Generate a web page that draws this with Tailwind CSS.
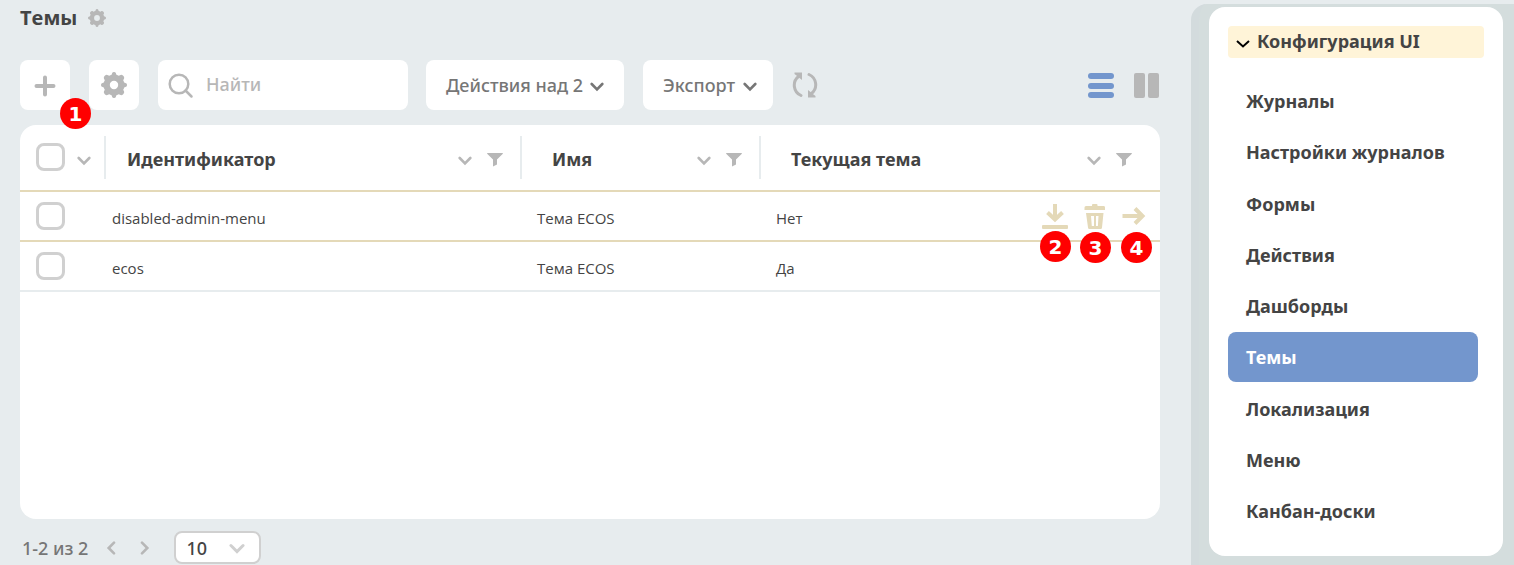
<!DOCTYPE html>
<html lang="ru">
<head>
<meta charset="utf-8">
<meta name="viewport" content="width=device-width, initial-scale=1">
<title>Темы</title>
<script src="https://cdn.jsdelivr.net/npm/@tailwindcss/browser@4"></script>
</head>
<body class="bg-[#e7ecee] font-['Open_Sans','Noto_Sans',sans-serif] text-[#444444]">
<svg class="hidden" aria-hidden="true">
  <symbol id="gear" viewBox="0 0 26 26">
    <path fill="currentColor" fill-rule="evenodd" d="M10.6 2.8 11.2 1Q11.500 0 13 0T14.800 1L15.400 2.800Q16.800 3.200 17.800 3.800L19.600 2.900Q20.800 2.400 22.200 3.800T23.100 6.400L22.200 8.200Q22.900 9.300 23.200 10.600L25 11.200Q26 11.500 26 13T25 14.800L23.200 15.400Q22.900 16.700 22.200 17.800L23.100 19.600Q23.600 20.800 22.200 22.200T19.600 23.100L17.800 22.200Q16.800 22.800 15.400 23.200L14.800 25Q14.500 26 13 26T11.200 25L10.600 23.200Q9.200 22.800 8.200 22.200L6.400 23.100Q5.200 23.600 3.800 22.200T2.900 19.600L3.800 17.800Q3.100 16.700 2.800 15.400L1 14.800Q0 14.500 0 13T1 11.200L2.800 10.600Q3.100 9.300 3.800 8.200L2.900 6.400Q2.400 5.200 3.800 3.800T6.400 2.900L8.200 3.800Q9.200 3.200 10.600 2.800ZM13 8.800a4.200 4.200 0 1 0 0 8.400a4.200 4.200 0 1 0 0-8.400Z"/>
  </symbol>
  <symbol id="chevron" viewBox="0 0 14 10">
    <path fill="none" stroke="currentColor" stroke-width="2.600" stroke-linecap="round" d="M1.700 2 7 7.300 12.300 2"/>
  </symbol>
  <symbol id="funnel" viewBox="0 0 16 14">
    <path fill="currentColor" d="M.5 0h15q.8.300.1 1L10 6.500V11.500L6 13.500V6.500L.4 1Q-.3.300.5 0Z"/>
  </symbol>
</svg>
<div class="flex min-h-screen">
  <main class="min-w-0 flex-1 pl-5 pr-[31px]">
    <header class="flex h-9 items-center gap-[11px]">
      <h1 class="text-xl font-bold">Темы</h1>
      <button type="button" aria-label="Настройки страницы" class="text-[#b7b7b7]"><svg class="size-[18px]"><use href="#gear"/></svg></button>
    </header>

    <div class="mt-6 flex h-[50px] items-center">
      <button type="button" aria-label="Создать" class="relative grid size-[50px] place-items-center rounded-lg bg-white text-[#b7b7b7]">
        <svg class="mt-0.5 size-[22px]" viewBox="0 0 22 22"><path fill="none" stroke="currentColor" stroke-width="4" stroke-linecap="round" d="M11 2.500v17M2.500 11h17"/></svg>
        <span class="absolute left-10 top-[38px] z-10 grid size-[31px] place-items-center rounded-full bg-[#ff0000] font-['DejaVu_Sans',sans-serif] text-xl font-bold leading-5 text-white">1</span>
      </button>
      <button type="button" aria-label="Настройки журнала" class="ml-[19px] grid size-[50px] place-items-center rounded-lg bg-white text-[#b7b7b7]"><svg class="size-[26px]"><use href="#gear"/></svg></button>
      <label class="ml-[19px] flex h-[50px] w-[250px] items-center gap-3 rounded-lg bg-white pl-2.5 text-[#b7b7b7]">
        <svg class="mt-0.5 size-[26px] shrink-0" viewBox="0 0 26 26"><g fill="none" stroke="currentColor" stroke-width="2.500" stroke-linecap="round"><circle cx="11" cy="11" r="9.300"/><path d="m17.500 17.500 6 6"/></g></svg>
        <input type="text" aria-label="Найти" placeholder="Найти" class="min-w-0 flex-1 pb-0.5 font-['Noto_Sans',sans-serif] text-lg font-medium text-[#444444] outline-none placeholder:text-[#b7b7b7]">
      </label>
      <button type="button" class="ml-[18px] flex h-[50px] items-center gap-[7px] rounded-lg bg-white px-5 font-['Noto_Sans',sans-serif] text-lg font-medium text-[#767676]">Действия над 2<svg class="mt-1 h-2.5 w-3.5"><use href="#chevron"/></svg></button>
      <button type="button" class="ml-[19px] flex h-[50px] items-center gap-2 rounded-lg bg-white pl-5 pr-4 font-['Noto_Sans',sans-serif] text-lg font-medium text-[#767676]">Экспорт<svg class="mt-1 h-2.5 w-3.5"><use href="#chevron"/></svg></button>
      <button type="button" aria-label="Обновить" class="ml-[19px] text-[#b7b7b7]">
        <svg class="size-[26px]" viewBox="0 0 26 26"><g fill="none" stroke="currentColor" stroke-width="3" stroke-linecap="round"><path d="M9 23.500A11.200 11.200 0 0 1 6.500 4.500"/><path d="M17 2.500A11.200 11.200 0 0 1 19.500 21.500"/></g><path fill="currentColor" d="M2.500.5h7.500v7.500L7.500 6 4.500 3.500 2.500 2ZM23.500 25.500H16v-7.500l2.500 2 3 2.500 2 1.500Z"/></svg>
      </button>
      <div class="ml-auto flex gap-5">
        <button type="button" aria-label="Таблица" class="text-[#7396cd]"><svg class="size-[26px]" viewBox="0 0 26 26"><g fill="currentColor"><rect y="1" width="26" height="6" rx="3"/><rect y="11" width="26" height="6" rx="3"/><rect y="20" width="26" height="6" rx="3"/></g></svg></button>
        <button type="button" aria-label="Предпросмотр" class="text-[#b7b7b7]"><svg class="size-[26px]" viewBox="0 0 26 26"><g fill="currentColor"><rect y="1" width="11" height="25" rx="2"/><rect x="14" y="1" width="11" height="25" rx="2"/></g></svg></button>
      </div>
    </div>

    <section class="mt-[15px] min-h-[394px] rounded-2xl bg-white">
      <table class="w-full table-fixed border-separate border-spacing-0 text-left">
        <colgroup><col class="w-[86px]"><col class="w-[416px]"><col class="w-[239px]"><col></colgroup>
        <thead>
          <tr class="font-['Noto_Sans',sans-serif] text-lg text-[#b7b7b7]">
            <th class="h-[67px] border-b-2 border-[#e4d9b8] p-0 align-middle">
              <div class="flex h-[43px] items-center border-r-2 border-[#e7ecee] pl-4">
                <input type="checkbox" aria-label="Выбрать все" class="mb-0.5 h-7 w-[29px] appearance-none rounded-lg border-3 border-[#d0d0d0] bg-white">
                <button type="button" aria-label="Меню выбора" class="ml-3 mt-1.5"><svg class="h-2.5 w-3.5"><use href="#chevron"/></svg></button>
              </div>
            </th>
            <th class="border-b-2 border-[#e4d9b8] p-0">
              <div class="flex h-[43px] items-center border-r-2 border-[#e7ecee] pl-[21px] pr-[17px]">
                <span class="flex-1 pt-0.5 font-bold text-[#444444]">Идентификатор</span>
                <button type="button" aria-label="Сортировка" class="mt-1.5"><svg class="h-2.5 w-3.5"><use href="#chevron"/></svg></button>
                <button type="button" aria-label="Фильтр" class="ml-[15px] mt-1"><svg class="h-3.5 w-4"><use href="#funnel"/></svg></button>
              </div>
            </th>
            <th class="border-b-2 border-[#e4d9b8] p-0">
              <div class="flex h-[43px] items-center border-r-2 border-[#e7ecee] pl-[30px] pr-[17px]">
                <span class="flex-1 pt-0.5 font-bold text-[#444444]">Имя</span>
                <button type="button" aria-label="Сортировка" class="mt-1.5"><svg class="h-2.5 w-3.5"><use href="#chevron"/></svg></button>
                <button type="button" aria-label="Фильтр" class="ml-[15px] mt-1"><svg class="h-3.5 w-4"><use href="#funnel"/></svg></button>
              </div>
            </th>
            <th class="border-b-2 border-[#e4d9b8] p-0">
              <div class="flex h-[43px] items-center pl-[30px] pr-7">
                <span class="flex-1 pt-0.5 font-bold text-[#444444]">Текущая тема</span>
                <button type="button" aria-label="Сортировка" class="mt-1.5"><svg class="h-2.5 w-3.5"><use href="#chevron"/></svg></button>
                <button type="button" aria-label="Фильтр" class="ml-[15px] mt-1"><svg class="h-3.5 w-4"><use href="#funnel"/></svg></button>
              </div>
            </th>
          </tr>
        </thead>
        <tbody class="text-[15px]">
          <tr>
            <td class="h-[50px] border-b-2 border-[#e4d9b8] p-0 pl-4"><input type="checkbox" aria-label="Выбрать disabled-admin-menu" class="block h-7 w-[29px] appearance-none rounded-lg border-3 border-[#d0d0d0] bg-white"></td>
            <td class="border-b-2 border-[#e4d9b8] p-0 pl-1.5 pt-1">disabled-admin-menu</td>
            <td class="border-b-2 border-[#e4d9b8] p-0 pl-[15px] pt-1">Тема ECOS</td>
            <td class="border-b-2 border-[#e4d9b8] p-0 pl-[15px] pr-3.5">
              <div class="flex items-center text-[#e4d9b8]">
                <span class="flex-1 pt-1 text-[#444444]">Нет</span>
                <button type="button" aria-label="Скачать" class="relative">
                  <svg class="size-[26px]" viewBox="0 0 26 26"><path fill="none" stroke="currentColor" stroke-width="4" d="M13 1v15M5.500 9.500l7.500 7 7.500-7"/><rect y="22" width="26" height="4" rx="1" fill="currentColor"/></svg>
                  <span class="absolute -left-0.5 top-7 z-10 grid size-[31px] place-items-center rounded-full bg-[#ff0000] font-['DejaVu_Sans',sans-serif] text-xl font-bold leading-5 text-white">2</span>
                </button>
                <button type="button" aria-label="Удалить" class="relative ml-4">
                  <svg class="h-[26px] w-[22px]" viewBox="0 0 22 26"><path fill="currentColor" fill-rule="evenodd" d="M2 3H8V2Q8 1 9 1H12.500Q13.500 1 13.500 2V3H20Q21 3 21 4.500V7H.5V4.500Q.5 3 2 3ZM2 10H19.500L18 24.500Q18 26 16.500 26H5.500Q4 26 4 24.500ZM7 13 7.800 23H10V13ZM12 13V23H13.900L14.500 13Z"/></svg>
                  <span class="absolute -left-1 top-[29px] z-10 grid size-[31px] place-items-center rounded-full bg-[#ff0000] font-['DejaVu_Sans',sans-serif] text-xl font-bold leading-5 text-white">3</span>
                </button>
                <button type="button" aria-label="Открыть" class="relative ml-4">
                  <svg class="h-[26px] w-6" viewBox="0 0 24 26"><path fill="none" stroke="currentColor" stroke-width="4" d="M.5 13H21M13 5.500 20.500 13 13 20.500"/></svg>
                  <span class="absolute -left-px top-[29px] z-10 grid size-[31px] place-items-center rounded-full bg-[#ff0000] font-['DejaVu_Sans',sans-serif] text-xl font-bold leading-5 text-white">4</span>
                </button>
              </div>
            </td>
          </tr>
          <tr>
            <td class="h-[50px] border-b-2 border-[#e7ecee] p-0 pl-4"><input type="checkbox" aria-label="Выбрать ecos" class="block h-7 w-[29px] appearance-none rounded-lg border-3 border-[#d0d0d0] bg-white"></td>
            <td class="border-b-2 border-[#e7ecee] p-0 pl-1.5 pt-1">ecos</td>
            <td class="border-b-2 border-[#e7ecee] p-0 pl-[15px] pt-1">Тема ECOS</td>
            <td class="border-b-2 border-[#e7ecee] p-0 pl-[15px] pt-1">Да</td>
          </tr>
        </tbody>
      </table>
    </section>

    <footer class="mt-3 flex items-center font-['Noto_Sans',sans-serif] text-lg font-medium text-[#767676]">
      <span class="pl-0.5">1-2 из 2</span>
      <button type="button" aria-label="Назад" class="ml-4 text-[#b7b7b7]"><svg class="h-3.5 w-3.5 rotate-90"><use href="#chevron"/></svg></button>
      <button type="button" aria-label="Вперёд" class="ml-5 text-[#b7b7b7]"><svg class="h-3.5 w-3.5 -rotate-90"><use href="#chevron"/></svg></button>
      <div class="relative ml-[22px]">
        <select aria-label="Записей на странице" class="h-[33px] w-[87px] appearance-none rounded-lg border-2 border-[#d0d0d0] bg-white pl-2.5 text-lg font-medium text-[#444444]"><option>10</option><option>20</option><option>50</option></select>
        <svg class="pointer-events-none absolute right-4 top-3 h-3 w-4 text-[#d0d0d0]"><use href="#chevron"/></svg>
      </div>
    </footer>
  </main>

  <aside class="mt-1 w-[323px] shrink-0 rounded-tl-2xl border-l-8 border-[#d3dbdd] bg-[#d4dddd] pb-[9px] pl-2.5 pr-[11px] pt-[3px]">
    <nav aria-label="Разделы" class="h-full rounded-2xl bg-white px-[19px] pt-[19px] font-['Noto_Sans',sans-serif] text-lg font-bold">
      <button type="button" aria-expanded="true" class="flex h-8 w-full items-center gap-[7px] rounded bg-[#fff4d8] pl-2"><svg class="mt-1 h-2.5 w-3.5 text-black" viewBox="0 0 14 10"><path fill="none" stroke="currentColor" stroke-width="2" d="m1 2 6 5.500L13 2"/></svg><span class="pb-0.5">Конфигурация UI</span></button>
      <ul class="mt-[18px] mr-1.5 flex h-[460px] flex-col justify-between">
        <li><a href="#" class="flex h-[50px] items-center rounded-lg pl-[18px]">Журналы</a></li>
        <li><a href="#" class="flex h-[50px] items-center rounded-lg pl-[18px]">Настройки журналов</a></li>
        <li><a href="#" class="flex h-[50px] items-center rounded-lg pl-[18px]">Формы</a></li>
        <li><a href="#" class="flex h-[50px] items-center rounded-lg pl-[18px]">Действия</a></li>
        <li><a href="#" class="flex h-[50px] items-center rounded-lg pl-[18px]">Дашборды</a></li>
        <li><a href="#" aria-current="page" class="flex h-[50px] items-center rounded-lg bg-[#7396cd] pl-[18px] text-white">Темы</a></li>
        <li><a href="#" class="flex h-[50px] items-center rounded-lg pl-[18px]">Локализация</a></li>
        <li><a href="#" class="flex h-[50px] items-center rounded-lg pl-[18px]">Меню</a></li>
        <li><a href="#" class="flex h-[50px] items-center rounded-lg pl-[18px]">Канбан-доски</a></li>
      </ul>
    </nav>
  </aside>
</div>
</body>
</html>
